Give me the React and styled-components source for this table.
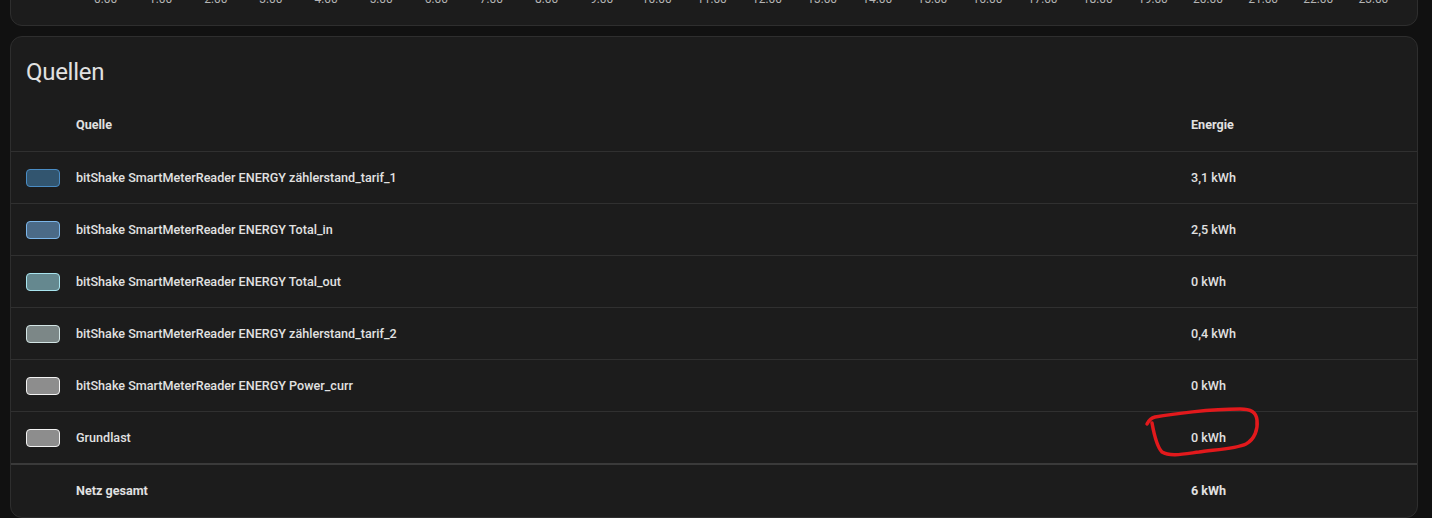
import React from 'react';
import styled, { createGlobalStyle } from 'styled-components';

const hours = Array.from({ length: 24 }, (_, i) => `${i}:00`);

const sources = [
  { name: 'bitShake SmartMeterReader ENERGY zählerstand_tarif_1', value: '3,1 kWh', fill: '#32556f', border: '#4a8cc4' },
  { name: 'bitShake SmartMeterReader ENERGY Total_in', value: '2,5 kWh', fill: '#4b6a87', border: '#7cb6ea' },
  { name: 'bitShake SmartMeterReader ENERGY Total_out', value: '0 kWh', fill: '#65888f', border: '#a8e4ee' },
  { name: 'bitShake SmartMeterReader ENERGY zählerstand_tarif_2', value: '0,4 kWh', fill: '#7c8787', border: '#d2e4e4' },
  { name: 'bitShake SmartMeterReader ENERGY Power_curr', value: '0 kWh', fill: '#8d8d8d', border: '#f2f2f2' },
  { name: 'Grundlast', value: '0 kWh', fill: '#8d8d8d', border: '#f2f2f2' },
];

function App() {
  return (
    <>
      <GlobalStyle />
      <Page>
        <ChartCard>
          <Axis>
            {hours.map((h) => (
              <Tick key={h}>{h}</Tick>
            ))}
          </Axis>
        </ChartCard>

        <Card>
          <Title>Quellen</Title>
          <Table>
            <HeadRow>
              <span />
              <HeadCell>Quelle</HeadCell>
              <HeadCell>Energie</HeadCell>
            </HeadRow>
            {sources.map((s) => (
              <Row key={s.name}>
                <Bullet $fill={s.fill} $border={s.border} />
                <Cell>{s.name}</Cell>
                <Cell>{s.value}</Cell>
              </Row>
            ))}
            <TotalRow>
              <span />
              <HeadCell>Netz gesamt</HeadCell>
              <HeadCell>6 kWh</HeadCell>
            </TotalRow>
          </Table>
          {/* hand drawn marker */}
          <Scribble width="1408" height="482" viewBox="0 0 1408 482">
            <path
              d="M1137,388 C1139,384 1141,382 1145,381 C1162,378 1200,373 1230,373 C1241,373 1246,376 1247,384 C1248,393 1245,403 1236,408 C1226,413 1200,414 1189,416 C1174,418 1160,421 1152,416 C1147,411 1144,398 1142,387"
              fill="none"
              stroke="#e2191c"
              strokeWidth="3.5"
              strokeLinecap="round"
              strokeLinejoin="round"
            />
          </Scribble>
        </Card>
      </Page>
    </>
  );
}

/////////////////////////

const GlobalStyle = createGlobalStyle`
  body {
    margin: 0;
    background: #111111;
    font-family: Roboto, "Noto Sans", sans-serif;
    color: #e1e1e1;
    overflow: hidden;
  }
`;

const Page = styled.div`
  display: flex;
  flex-direction: column;
  gap: 10px;
  margin-top: -20px;
  padding: 0 14px 0 10px;
`;

const ChartCard = styled.div`
  background: #1c1c1c;
  border: 1px solid #2e2e2e;
  border-radius: 12px;
  padding: 10px 16px 18px 67px;
`;

const Axis = styled.div`
  display: grid;
  grid-template-columns: repeat(24, 1fr);
`;

const Tick = styled.span`
  text-align: center;
  font-size: 12px;
  line-height: 16px;
  color: #b4b4b4;
`;

const Card = styled.div`
  position: relative;
  background: #1c1c1c;
  border: 1px solid #2e2e2e;
  border-radius: 12px;
  height: 480px;
  overflow: hidden;
`;

const Title = styled.h1`
  margin: 0;
  padding: 19px 15px 7px;
  font-size: 24px;
  line-height: 32px;
  font-weight: 400;
  letter-spacing: -0.012em;
  color: #e1e1e1;
`;

const Table = styled.div`
  display: flex;
  flex-direction: column;
`;

const RowBase = styled.div`
  display: grid;
  grid-template-columns: 50px 1fr 226px;
  align-items: center;
  padding-left: 15px;
  font-size: 12.6px;
`;

const HeadRow = styled(RowBase)`
  height: 56px;
  padding-top: 3px;
  box-sizing: border-box;
  border-bottom: 1px solid #303030;
  height: 57px;
`;

const Row = styled(RowBase)`
  height: 51px;
  border-bottom: 1px solid #303030;

  &:nth-last-child(2) {
    border-bottom: 2px solid #3a3a3a;
  }
`;

const TotalRow = styled(RowBase)`
  height: 51px;
`;

const HeadCell = styled.span`
  font-weight: 700;
  color: #e1e1e1;
`;

const Cell = styled.span`
  font-weight: 500;
  color: #e1e1e1;
`;

const Bullet = styled.span`
  box-sizing: content-box;
  width: 32px;
  height: 16px;
  border-radius: 4px;
  border: 1px solid ${(p) => p.$border};
  background: ${(p) => p.$fill};
`;

const Scribble = styled.svg`
  position: absolute;
  left: -1px;
  top: -1px;
  pointer-events: none;
`;

export default App;
